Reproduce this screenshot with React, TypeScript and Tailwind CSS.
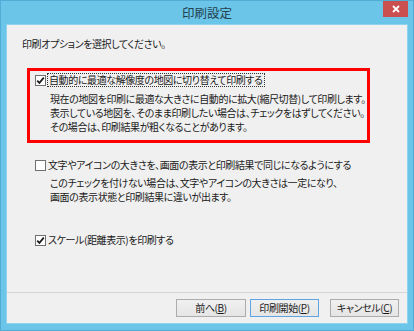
import React from "react";

const font = {
  fontFamily: '"Noto Sans CJK JP", "Noto Sans", sans-serif',
};

const Check: React.FC<{ checked?: boolean }> = ({ checked }) => (
  <span className="w-[11px] h-[11px] border border-[#707070] bg-white flex items-center justify-center shrink-0">
    {checked && (
      <svg width="9" height="9" viewBox="0 0 9 9">
        <path d="M1.2 4.6 L3.4 6.9 L7.8 1.6" fill="none" stroke="#1a1a1a" strokeWidth="1.7" />
      </svg>
    )}
  </span>
);

const Btn: React.FC<{ label: string; keyChar: string; primary?: boolean; w: string }> = ({
  label,
  keyChar,
  primary,
  w,
}) => (
  <button
    className={`${w} h-[18px] border ${
      primary ? "border-[#5fa3e0]" : "border-[#acacac]"
    } bg-gradient-to-b from-[#f0f0f0] to-[#e5e5e5] text-[10px] tracking-[-0.4px] leading-[14px] text-[#1a1a1a] flex items-center justify-center [font-feature-settings:'palt']`}
  >
    {label}(<span className="underline">{keyChar}</span>)
  </button>
);

export default function App() {
  return (
    <div
      style={font}
      className="w-[414px] h-[331px] bg-[#6ac5e8] border border-[#52acd6] flex flex-col px-[5px] pb-[6px]"
    >
      <div className="h-[23px] relative flex items-center justify-center">
        <span className="text-[12.5px] text-[#22404c] mt-[2px]">印刷設定</span>
        <div className="absolute top-0 right-0 w-[25px] h-[16px] bg-[#c9504e] flex items-center justify-center">
          <svg width="8" height="8" viewBox="0 0 8 8">
            <path d="M1 1 L7 7 M7 1 L1 7" stroke="#fff" strokeWidth="1.8" />
          </svg>
        </div>
      </div>
      <div className="flex-1 bg-[#f0f0f0] border border-[#8fd2ee] flex flex-col text-[10px] tracking-[-0.4px] leading-[14px] text-[#1a1a1a] [font-feature-settings:'palt']">
        <div className="mt-[12px] pl-[15px]">印刷オプションを選択してください。</div>

        <div className="mt-[17px] ml-[20px] w-[343px] border-[3px] border-[#ff0000] pt-[2px] pb-[6px] pl-[5px]">
          <div className="flex items-center h-[14px]">
            <Check checked />
            <span className="ml-[1px] border border-dotted border-[#333] px-[1px] leading-[12px]">
              自動的に最適な解像度の地図に切り替えて印刷する
            </span>
          </div>
          <div className="mt-[5px] pl-[15px] whitespace-nowrap">
            <div>現在の地図を印刷に最適な大きさに自動的に拡大(縮尺切替)して印刷します。</div>
            <div>表示している地図を、そのまま印刷したい場合は、チェックをはずしてください。</div>
            <div>その場合は、印刷結果が粗くなることがあります。</div>
          </div>
        </div>

        <div className="mt-[15px] pl-[28px] whitespace-nowrap">
          <div className="flex items-center h-[14px] gap-[2px]">
            <Check />
            <span>文字やアイコンの大きさを、画面の表示と印刷結果で同じになるようにする</span>
          </div>
          <div className="mt-[4px] pl-[15px]">
            <div>このチェックを付けない場合は、文字やアイコンの大きさは一定になり、</div>
            <div>画面の表示状態と印刷結果に違いが出ます。</div>
          </div>
        </div>

        <div className="mt-[29px] pl-[28px]">
          <div className="flex items-center h-[14px] gap-[2px]">
            <Check checked />
            <span>スケール(距離表示)を印刷する</span>
          </div>
        </div>

        <div className="mt-auto border-t border-[#d5d5d5] h-[31px] flex items-center justify-end pr-[8px] pb-[1px]">
          <Btn label="前へ" keyChar="B" w="w-[70px]" />
          <div className="ml-[4px]">
            <Btn label="印刷開始" keyChar="P" primary w="w-[69px]" />
          </div>
          <div className="ml-[11px]">
            <Btn label="キャンセル" keyChar="C" w="w-[69px]" />
          </div>
        </div>
      </div>
    </div>
  );
}
